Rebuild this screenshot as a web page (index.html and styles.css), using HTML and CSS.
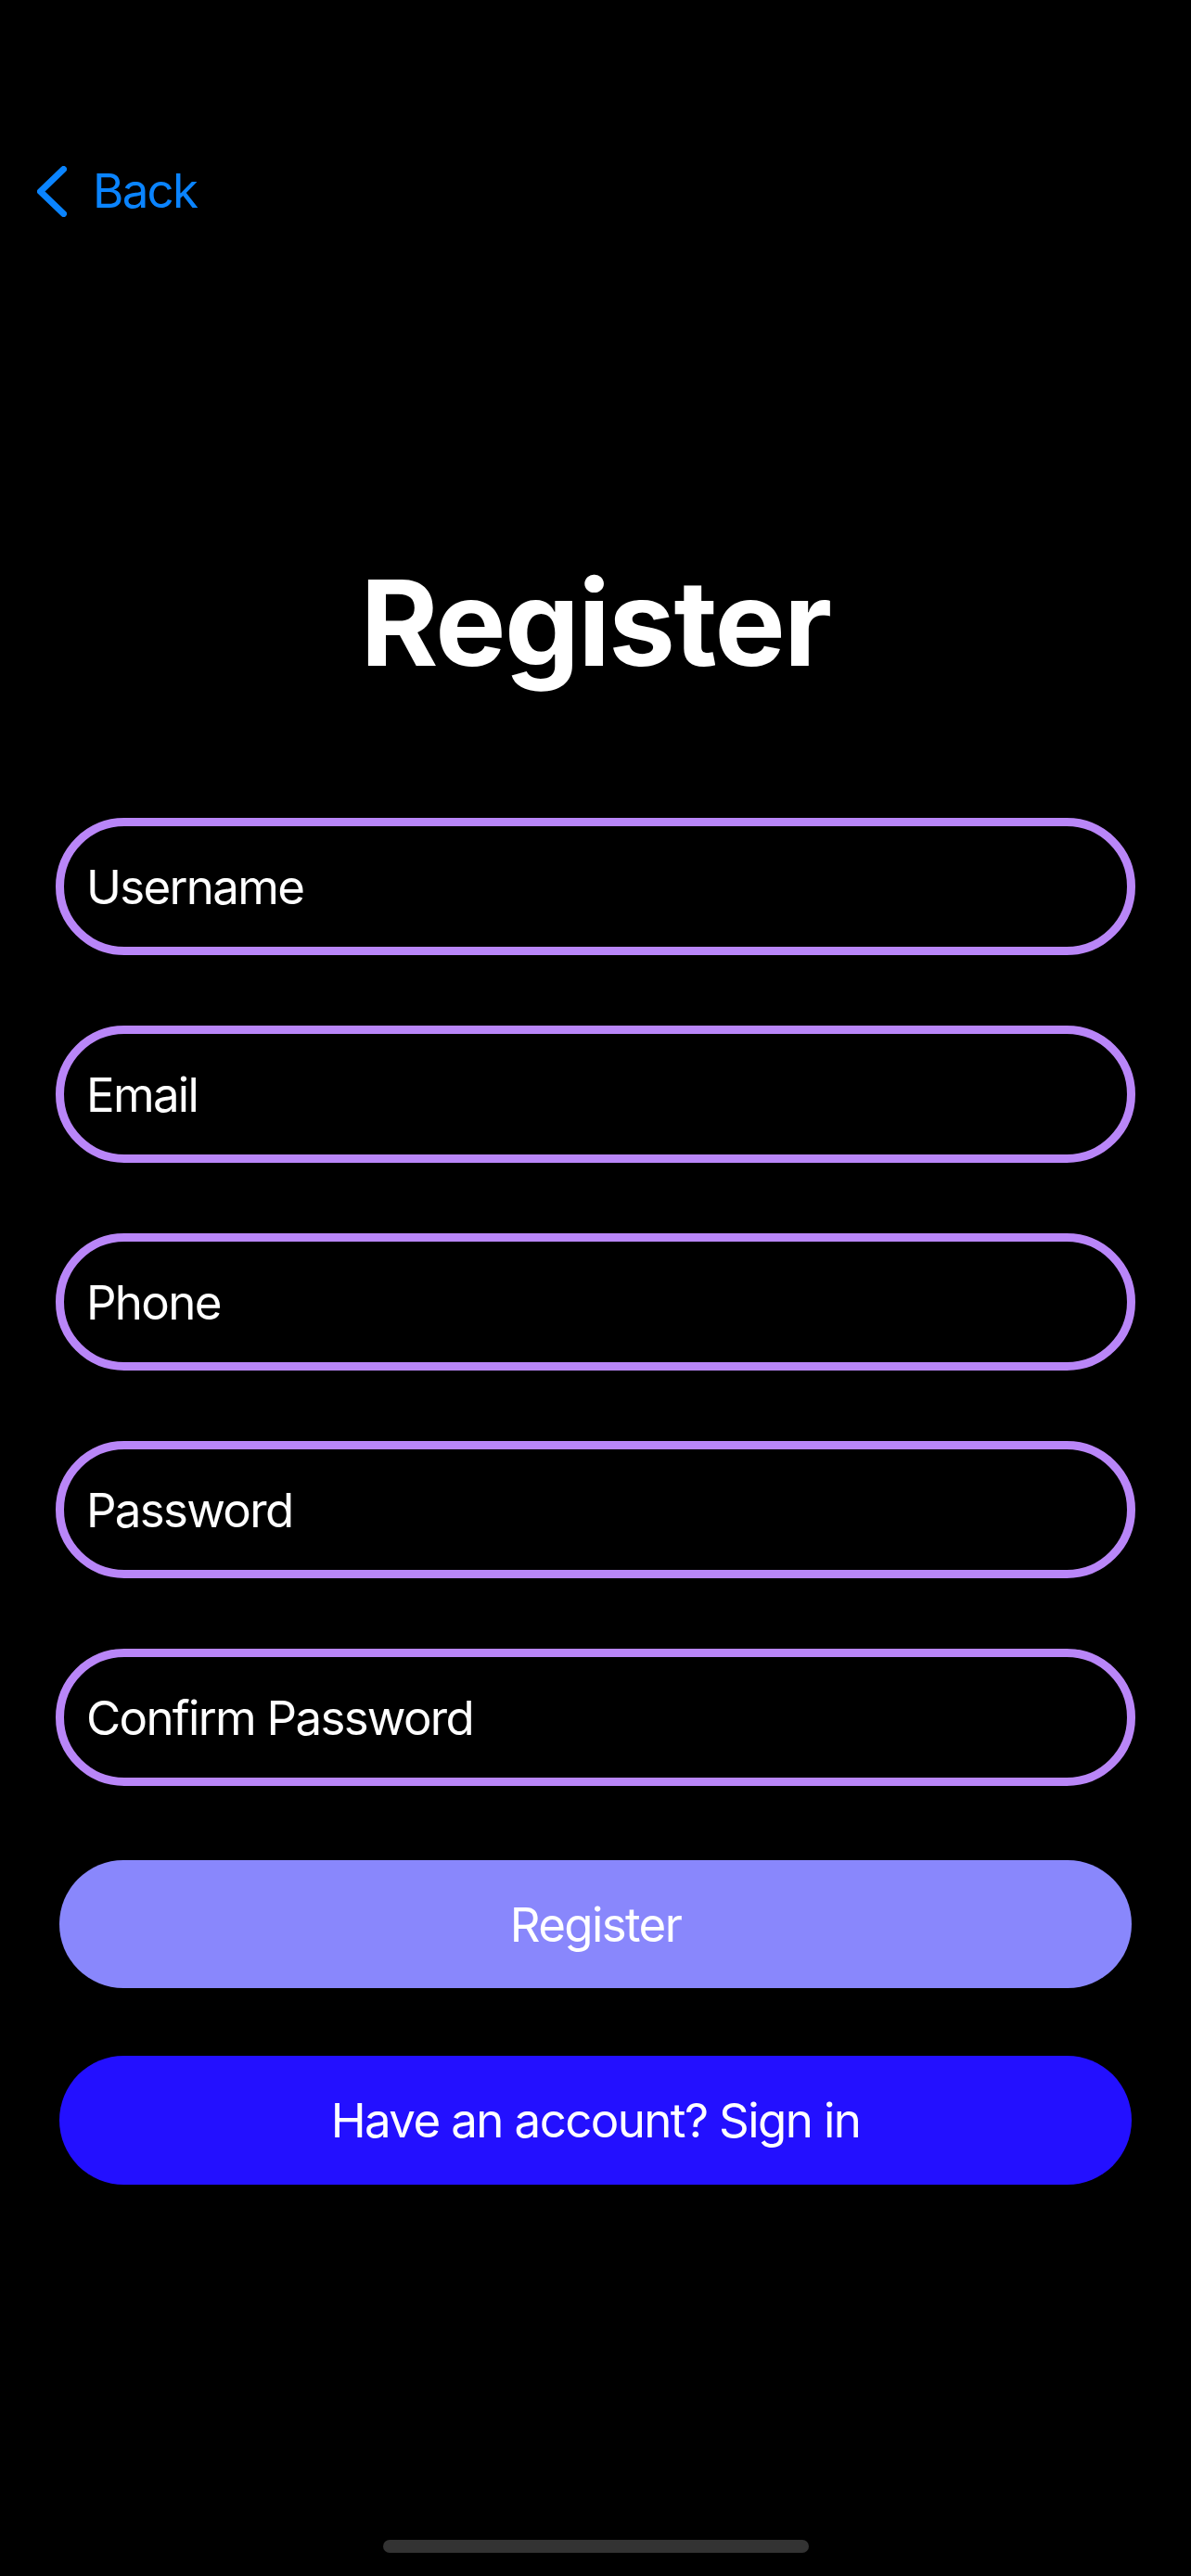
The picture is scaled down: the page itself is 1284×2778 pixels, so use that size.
FILE: index.html
```html
<!DOCTYPE html>
<html lang="en">
<head>
    <meta charset="UTF-8">
    <meta name="viewport" content="width=device-width, initial-scale=1.0">
    <title>Register</title>
    <link rel="stylesheet" href="styles.css">
</head>
<body>
    <div class="screen">
        <nav class="nav-bar">
            <a class="back-link" href="#">
                <svg class="back-icon" width="32" height="55" viewBox="0 0 32 55">
                    <polyline points="28.5,3.5 3.5,27.5 28.5,51.5" fill="none" stroke="currentColor" stroke-width="7" stroke-linecap="round" stroke-linejoin="round"/>
                </svg>
                <span>Back</span>
            </a>
        </nav>

        <h1 class="title-text">Register</h1>

        <form class="register-form" id="registerform">
            <input class="textbox" type="text" name="username" placeholder="Username">
            <input class="textbox" type="email" name="email" placeholder="Email">
            <input class="textbox" type="tel" name="phone" placeholder="Phone">
            <input class="textbox" type="password" name="password" placeholder="Password">
            <input class="textbox" type="password" name="confirm" placeholder="Confirm Password">

            <button class="main-btn register-btn" type="submit">Register</button>
            <button class="main-btn signin-btn" type="button">Have an account? Sign in</button>
        </form>

        <div class="home-indicator"></div>
    </div>
</body>
</html>
```

FILE: styles.css
```css
body {
    font-family: Inter, "Noto Sans", sans-serif;
    background-color: #000000;
    color: #ffffff;
    margin: 0;
    padding: 0;
}

.screen {
    display: flex;
    flex-direction: column;
    min-height: 2778px;
    box-sizing: border-box;
}

.nav-bar {
    padding: 176px 0 0 40px;
    height: 60px;
}

.back-link {
    display: inline-flex;
    align-items: center;
    gap: 28px;
    height: 60px;
    color: #0a84ff;
    font-size: 51px;
    line-height: 60px;
    letter-spacing: -1.7px;
    text-decoration: none;
}

.back-icon {
    display: block;
}

.title-text {
    margin: 361px 0 0;
    font-size: 128px;
    line-height: 150px;
    font-weight: 700;
    text-align: center;
    letter-spacing: -1.6px;
}

.register-form {
    display: flex;
    flex-direction: column;
    gap: 76px;
    padding: 0 60px;
    margin-top: 135px;
}

.textbox {
    height: 148px;
    width: 100%;
    box-sizing: border-box;
    padding: 0 24px;
    border: 9px solid #b986f8;
    border-radius: 74px;
    background-color: #000000;
    color: #ffffff;
    font-family: inherit;
    font-size: 51px;
    letter-spacing: -1.7px;
    outline: none;
}

.textbox::placeholder {
    color: #ffffff;
    opacity: 1;
}

.main-btn {
    margin: 0 4px;
    border: none;
    color: #ffffff;
    font-family: inherit;
    font-size: 51px;
    font-weight: 400;
    letter-spacing: -1.6px;
    cursor: pointer;
}

.register-btn {
    margin-top: 4px;
    height: 138px;
    border-radius: 69px;
    background-color: #8987fc;
}

.signin-btn {
    margin-top: -3px;
    height: 139px;
    border-radius: 70px;
    background-color: #2310ff;
}

.home-indicator {
    margin: auto auto 25px;
    width: 459px;
    height: 14px;
    border-radius: 7px;
    background-color: #333333;
}
```
